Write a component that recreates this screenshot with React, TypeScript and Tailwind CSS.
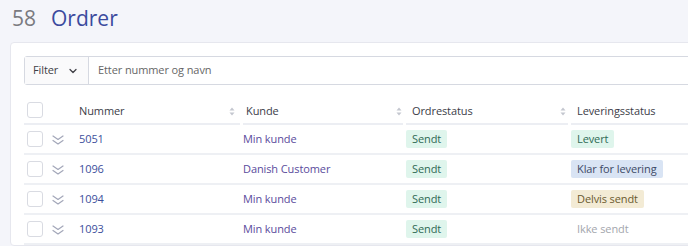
import React from "react";
import { ChevronDown } from "lucide-react";

type Order = {
  nummer: string;
  kunde: string;
  ordrestatus: string;
  levering: string;
};

const orders: Order[] = [
  { nummer: "5051", kunde: "Min kunde", ordrestatus: "Sendt", levering: "Levert" },
  { nummer: "1096", kunde: "Danish Customer", ordrestatus: "Sendt", levering: "Klar for levering" },
  { nummer: "1094", kunde: "Min kunde", ordrestatus: "Sendt", levering: "Delvis sendt" },
  { nummer: "1093", kunde: "Min kunde", ordrestatus: "Sendt", levering: "Ikke sendt" },
];

const leveringStyle: Record<string, string> = {
  Levert: "bg-[#dff5ec] text-[#2f6a55]",
  "Klar for levering": "bg-[#d9e4f4] text-[#3d4a66]",
  "Delvis sendt": "bg-[#f3ebd5] text-[#6a5a30]",
  "Ikke sendt": "text-[#a3a6ad]",
};

function SortIcon() {
  return (
    <svg width="6" height="9" viewBox="0 0 6 9" className="shrink-0">
      <path d="M3 0.5 L5.5 3.5 H0.5 Z" fill="#c4c7cf" />
      <path d="M3 8.5 L5.5 5.5 H0.5 Z" fill="#c4c7cf" />
    </svg>
  );
}

function ExpandIcon() {
  return (
    <svg width="12" height="10" viewBox="0 0 12 10" fill="none" className="shrink-0">
      <path d="M1 1 L6 4.5 L11 1" stroke="#a3a7b9" strokeWidth="1.2" strokeLinecap="round" strokeLinejoin="round" />
      <path d="M1 5.5 L6 9 L11 5.5" stroke="#a3a7b9" strokeWidth="1.2" strokeLinecap="round" strokeLinejoin="round" />
    </svg>
  );
}

function Checkbox() {
  return <div className="w-4 h-4 rounded-[3px] border border-[#d9dbe2] bg-white shrink-0" />;
}

function App() {
  return (
    <div
      className="w-[688px] h-[246px] overflow-hidden bg-[#f4f5fa] text-[11px] tracking-[-0.1px] text-[#444]"
      style={{ fontFamily: '"Open Sans", "Noto Sans", sans-serif' }}
    >
      <h1 className="flex items-baseline h-[42px] pl-3 pt-[4px] text-[21px] leading-[28px] tracking-normal font-normal">
        <span className="text-[#7a7a80]">58</span>
        <span className="ml-[15px] text-[#3b4a9e]">Ordrer</span>
      </h1>

      <div className="ml-[10px] w-[720px] bg-white border border-[#e6e7ee] rounded-[4px] pt-[13px] pl-[13px]">
        <div className="flex h-[29px] border border-[#d6d9e1] rounded-[3px] items-stretch">
          <div className="flex items-center w-[64px] pl-[8px] gap-[9px] bg-[#fafafb] border-r border-[#d6d9e1] text-[#3f3f46]">
            <span>Filter</span>
            <ChevronDown size={12} strokeWidth={2.5} className="text-[#3f3f46]" />
          </div>
          <div className="flex items-center pl-[9px] text-[#666]">Etter nummer og navn</div>
        </div>

        <div className="mt-[12px]">
          <div className="grid grid-cols-[219px_163px_165px_1fr] h-[28px] font-medium text-[#3c3d48]">
            <div className="flex items-center mr-[3px] border-b-2 border-[#eceef3]">
              <div className="pl-[3px]">
                <Checkbox />
              </div>
              <span className="ml-[36px] mt-[2px]">Nummer</span>
              <span className="ml-auto mr-[5px] mt-[2px]">
                <SortIcon />
              </span>
            </div>
            <div className="flex items-center mr-[3px] border-b-2 border-[#eceef3] pl-[3px] pt-[2px]">
              <span>Kunde</span>
              <span className="ml-auto mr-[1px]">
                <SortIcon />
              </span>
            </div>
            <div className="flex items-center mr-[3px] border-b-2 border-[#eceef3] pl-[6px] pt-[2px]">
              <span>Ordrestatus</span>
              <span className="ml-auto mr-[2px]">
                <SortIcon />
              </span>
            </div>
            <div className="flex items-center border-b-2 border-[#eceef3] pl-[6px] pt-[2px]">
              <span>Leveringsstatus</span>
            </div>
          </div>

          {orders.map((o) => (
            <div
              key={o.nummer}
              className="grid grid-cols-[219px_163px_165px_1fr] h-[30px] border-b-2 border-[#eef0f4] items-center"
            >
              <div className="flex items-center">
                <div className="pl-[3px]">
                  <Checkbox />
                </div>
                <span className="ml-[9px] mt-[1px]">
                  <ExpandIcon />
                </span>
                <span className="ml-[15px] text-[#3d4f9c]">{o.nummer}</span>
              </div>
              <div className="text-[#5a4b9c]">{o.kunde}</div>
              <div>
                <span className="inline-block px-[6px] py-[1px] rounded-[2px] bg-[#dff5ec] text-[#2f6a55]">
                  {o.ordrestatus}
                </span>
              </div>
              <div>
                <span
                  className={`inline-block px-[6px] py-[1px] rounded-[2px] ${leveringStyle[o.levering]}`}
                >
                  {o.levering}
                </span>
              </div>
            </div>
          ))}
        </div>
      </div>
    </div>
  );
}

export default App;
